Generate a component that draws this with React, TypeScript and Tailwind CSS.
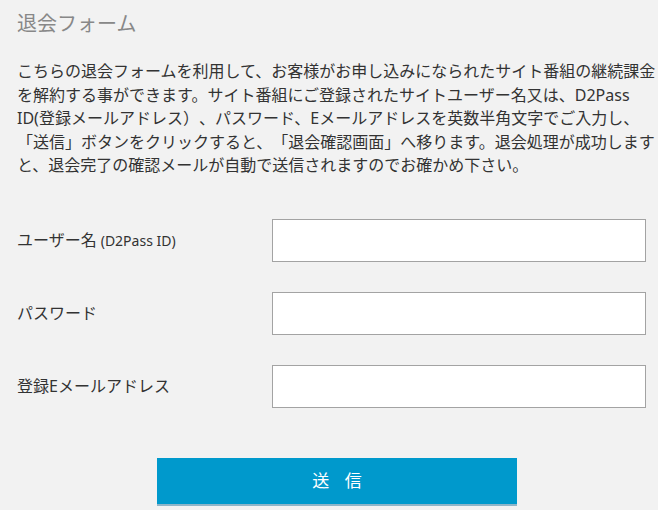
export default function App() {
    const fields = [
        { label: "ユーザー名", sub: "(D2Pass ID)", type: "text" },
        { label: "パスワード", sub: "", type: "password" },
        { label: "登録Eメールアドレス", sub: "", type: "email" },
    ]

    return (
        <div
            className="w-full h-[510px] overflow-hidden bg-[#f2f2f2] pl-[17px] pt-[10px] text-[#333333] [text-spacing-trim:space-all]"
            style={{ fontFamily: '"Noto Sans", "Noto Sans CJK JP", sans-serif' }}
        >
            {/* TITLE */}
            <h1 className="text-[20px] leading-[28px] text-[#888888] font-normal">退会フォーム</h1>

            {/* DESCRIPTION */}
            <p className="mt-[22px] text-[16px] leading-[23.5px] whitespace-nowrap">
                こちらの退会フォームを利用して、お客様がお申し込みになられたサイト番組の継続課金
                <br />
                を解約する事ができます。サイト番組にご登録されたサイトユーザー名又は、D2Pass
                <br />
                ID(登録メールアドレス）、パスワード、Eメールアドレスを英数半角文字でご入力し、
                <br />
                「送信」ボタンをクリックすると、「退会確認画面」へ移ります。退会処理が成功します
                <br />
                と、退会完了の確認メールが自動で送信されますのでお確かめ下さい。
            </p>

            {/* FORM */}
            <form className="mt-[41px] flex flex-col gap-[30px]" onSubmit={(e) => e.preventDefault()}>
                {fields.map((f) => (
                    <div key={f.label} className="flex items-center">
                        <label className="w-[255px] shrink-0 text-[16px] leading-[24px]">
                            {f.label}
                            {f.sub && <span className="ml-1 text-[14px]">{f.sub}</span>}
                        </label>
                        <input
                            type={f.type}
                            className="w-[374px] shrink-0 h-[43px] bg-white border border-[#a3a3a3] outline-none px-2"
                        />
                    </div>
                ))}

                <button
                    type="submit"
                    className="ml-[140px] mt-[20px] w-[360px] h-[46px] bg-[#0099cc] text-white text-[17px] tracking-[0.9em] pl-[0.9em] shadow-[0_2px_0_#8fb5c8]"
                >
                    送信
                </button>
            </form>
        </div>
    )
}
